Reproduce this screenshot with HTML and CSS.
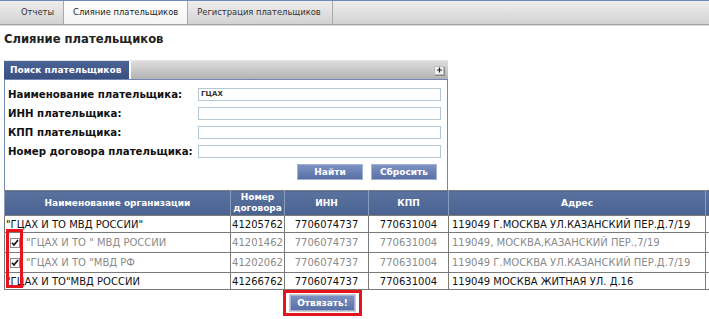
FILE: index.html
```html
<!DOCTYPE html>
<html lang="ru">
<head>
    <meta charset="UTF-8">
    <title>Слияние плательщиков</title>
    <link rel="stylesheet" href="styles.css">
</head>
<body>
    <div class="tabs">
        <a class="tab first">Отчеты</a>
        <a class="tab active">Слияние плательщиков</a>
        <a class="tab">Регистрация плательщиков</a>
    </div>

    <h1 class="title">Слияние плательщиков</h1>

    <div class="panel">
        <div class="panel-head">
            <div class="panel-tab">Поиск плательщиков</div>
            <div class="panel-bar">
                <span class="toggle">
                    <svg width="7" height="6" viewBox="0 0 7 6"><path d="M3.5 0.5v5M1 3h5" stroke="#222" stroke-width="1.2"/></svg>
                </span>
            </div>
        </div>
        <div class="panel-body">
            <div class="form-row">
                <label>Наименование плательщика:</label>
                <div class="field">ГЦАХ</div>
            </div>
            <div class="form-row">
                <label>ИНН плательщика:</label>
                <div class="field"></div>
            </div>
            <div class="form-row">
                <label>КПП плательщика:</label>
                <div class="field"></div>
            </div>
            <div class="form-row">
                <label>Номер договора плательщика:</label>
                <div class="field"></div>
            </div>
            <div class="buttons">
                <button class="btn">Найти</button>
                <button class="btn">Сбросить</button>
            </div>
        </div>
    </div>

    <div class="grid-wrap">
        <table class="grid">
            <tr class="head">
                <th class="c-name">Наименование организации</th>
                <th class="c-num">Номер<br>договора</th>
                <th class="c-inn">ИНН</th>
                <th class="c-kpp">КПП</th>
                <th class="c-addr">Адрес</th>
                <th class="c-more"></th>
            </tr>
            <tr class="short">
                <td class="name">"ГЦАХ И ТО МВД РОССИИ"</td>
                <td class="mid">41205762</td>
                <td class="mid">7706074737</td>
                <td class="mid">770631004</td>
                <td>119049 Г.МОСКВА УЛ.КАЗАНСКИЙ ПЕР.Д.7/19</td>
                <td></td>
            </tr>
            <tr class="picked">
                <td class="name"><span class="check"><svg width="8" height="8" viewBox="0 0 8 8"><path d="M1 3.8l2 2.2 4-5" fill="none" stroke="#111" stroke-width="1.6"/></svg></span>"ГЦАХ И ТО " МВД РОССИИ</td>
                <td class="mid">41201462</td>
                <td class="mid">7706074737</td>
                <td class="mid">770631004</td>
                <td>119049, МОСКВА,КАЗАНСКИЙ ПЕР.,7/19</td>
                <td></td>
            </tr>
            <tr class="picked">
                <td class="name"><span class="check"><svg width="8" height="8" viewBox="0 0 8 8"><path d="M1 3.8l2 2.2 4-5" fill="none" stroke="#111" stroke-width="1.6"/></svg></span>"ГЦАХ И ТО "МВД РФ</td>
                <td class="mid">41202062</td>
                <td class="mid">7706074737</td>
                <td class="mid">770631004</td>
                <td>119049 Г.МОСКВА УЛ.КАЗАНСКИЙ ПЕР.Д.7/19</td>
                <td></td>
            </tr>
            <tr class="short">
                <td class="name">"ГЦАХ И ТО"МВД РОССИИ</td>
                <td class="mid">41266762</td>
                <td class="mid">7706074737</td>
                <td class="mid">770631004</td>
                <td>119049 МОСКВА ЖИТНАЯ УЛ. Д.16</td>
                <td></td>
            </tr>
        </table>
        <div class="mark-checks"></div>
    </div>

    <div class="actions">
        <span class="mark-btn"><button class="btn unbind">Отвязать!</button></span>
    </div>
</body>
</html>
```

FILE: styles.css
```css
html, body {
    overflow: hidden;
}
body {
    margin: 0;
    font-family: "DejaVu Sans", Verdana, sans-serif;
    color: #111;
    background-color: #fff;
}
.tabs {
    display: flex;
    height: 23px;
    border-top: 1px solid #6d88bd;
    border-bottom: 1px solid #a4a4a4;
    background: linear-gradient(#eeeeee, #d2d2d2);
    box-shadow: 0 1px 0 #d8d8d8;
}
.tab {
    padding: 0 9px;
    line-height: 23px;
    font-size: 8.4px;
    color: #333;
    border-right: 1px solid #a9a9a9;
}
.tab.first {
    padding-left: 21px;
}
.tab.active {
    background: linear-gradient(#ffffff, #f4f4f4);
    color: #222;
}
.tab:last-child {
    padding-right: 11px;
}
.title {
    margin: 6px 0 0 4px;
    font-size: 11.6px;
    line-height: 16px;
    font-weight: bold;
    color: #222;
}
.panel {
    width: 444px;
    margin: 13px 0 0 4px;
}
.panel-head {
    display: flex;
    height: 18px;
    border-top: 1px solid #e4e4e4;
}
.panel-tab {
    width: 119px;
    padding-left: 6px;
    background: linear-gradient(#4a6396, #394f80);
    color: #fff;
    font-size: 9px;
    font-weight: bold;
    line-height: 18px;
    border-right: 2px solid #fff;
}
.panel-bar {
    flex: 1;
    display: flex;
    justify-content: flex-end;
    align-items: center;
    padding-right: 4px;
    background: linear-gradient(#dedede, #b3b3b3);
}
.toggle {
    display: flex;
    align-items: center;
    justify-content: center;
    width: 8px;
    height: 7px;
    background: #f2f2f2;
    border: 1px solid #bbb;
    box-shadow: 1px 1px 0 #888;
}
.panel-body {
    border: 1px solid #7387b4;
    border-bottom: none;
    padding: 8px 6px 10px 3px;
}
.form-row {
    display: flex;
    align-items: center;
    height: 13px;
    margin-bottom: 6px;
}
.form-row label {
    width: 191px;
    font-size: 10.2px;
    font-weight: bold;
    color: #111;
    white-space: nowrap;
}
.field {
    width: 240px;
    height: 11px;
    border: 1px solid #b3c8d1;
    font-size: 7px;
    font-weight: bold;
    line-height: 11px;
    padding-left: 2px;
    color: #333;
}
.buttons {
    display: flex;
    justify-content: flex-end;
    gap: 8px;
    margin-top: 3px;
    padding-right: 4px;
}
.btn {
    width: 66px;
    height: 16px;
    padding: 0;
    border: 1px solid #a3b1d2;
    background: linear-gradient(#7d92c1, #5870a5);
    color: #fff;
    font-family: "DejaVu Sans", Verdana, sans-serif;
    font-size: 9px;
    font-weight: bold;
    cursor: pointer;
}
.grid-wrap {
    position: relative;
    margin-left: 4px;
}
.grid {
    width: 716px;
    border-collapse: collapse;
    table-layout: fixed;
    font-size: 10px;
}
.grid th, .grid td {
    border: 1px solid #7a7a7a;
    padding: 0;
    white-space: nowrap;
    overflow: hidden;
}
.grid th {
    height: 24px;
    background: linear-gradient(#5a729f, #4a6290);
    color: #fff;
    font-size: 9px;
    font-weight: bold;
    line-height: 11px;
    border-color: #7d7d7d #8a9cc0;
}
.c-name { width: 225px; }
.c-num { width: 53px; }
.c-inn { width: 83px; }
.c-kpp { width: 79px; }
.c-addr { width: 256px; }
.grid td {
    padding-left: 3px;
}
.grid td.name {
    padding-left: 1px;
}
.grid td.mid {
    padding-left: 0;
    text-align: center;
}
.grid tr.short td {
    height: 16px;
}
.grid tr.picked td {
    height: 19px;
    color: #8a8a8a;
}
.check {
    display: inline-flex;
    align-items: center;
    justify-content: center;
    width: 8px;
    height: 8px;
    margin: 0 6px 0 4px;
    vertical-align: -1px;
    border: 1px solid #8c8c8c;
    background: #fdfdfd;
}
.mark-checks {
    position: absolute;
    left: 2px;
    top: 39px;
    width: 17px;
    height: 59px;
    box-sizing: border-box;
    border: 3px solid #e3161d;
}
.actions {
    padding: 0 0 0 283px;
}
.mark-btn {
    display: inline-block;
    border: 3px solid #e3161d;
    padding: 2px 4px;
}
.btn.unbind {
    display: block;
    width: 65px;
    box-shadow: 0 0 0 1px #cfcfcf;
}
```
